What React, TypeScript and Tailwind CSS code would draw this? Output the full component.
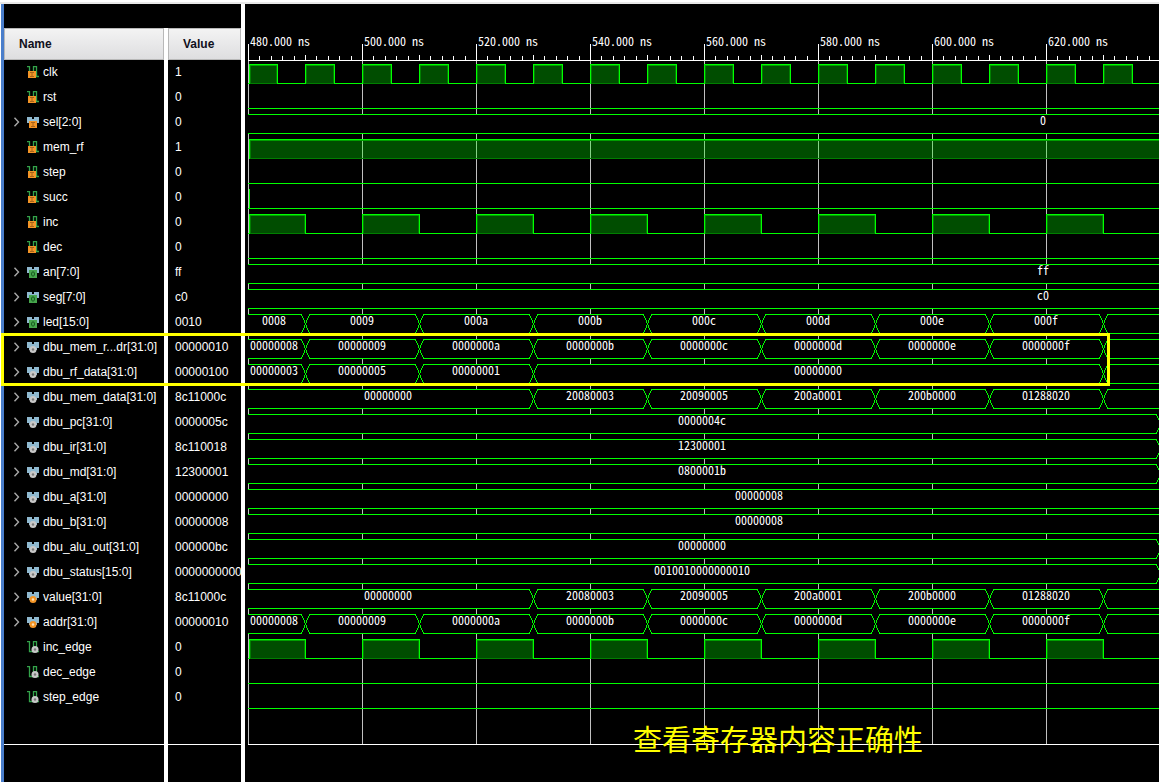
import React from "react";

type Badge = "in" | "out" | "net" | "reg";

type Pulse = { kind: "bit"; highs: [number, number][] };
type Bus = { kind: "bus"; edges: number[]; labels: [number, string][] };

type Signal = {
  name: string;
  value: string;
  badge: Badge;
  wave: Pulse | Bus;
};

const X0 = 3;
const ROW = 25;
const WIDE = 4000;
const at = (ns: number) => X0 + Math.round((ns - 480) * 5.7);

const range = (n: number) => Array.from({ length: n }, (_, i) => i);

const low: Pulse = { kind: "bit", highs: [] };
const clock: Pulse = {
  kind: "bit",
  highs: range(16).map((i) => [480 + i * 10, 485 + i * 10]),
};
const toggle: Pulse = {
  kind: "bit",
  highs: range(8).map((i) => [480 + i * 20, 490 + i * 20]),
};
const bus = (edges: number[], labels: [number, string][]): Bus => ({
  kind: "bus",
  edges,
  labels,
});

const steps = range(8).map((i) => 490 + i * 20);
const counted = (prefix: string) =>
  bus(
    steps,
    ["8", "9", "a", "b", "c", "d", "e", "f"].map((d, i) => [
      i === 0 ? 29 : 117 + (i - 1) * 114,
      prefix + d,
    ])
  );
const memory = bus(steps.slice(2), [
  [143, "00000000"],
  [345, "20080003"],
  [459, "20090005"],
  [573, "200a0001"],
  [687, "200b0000"],
  [801, "01288020"],
]);

const signals: Signal[] = [
  { name: "clk", value: "1", badge: "in", wave: clock },
  { name: "rst", value: "0", badge: "in", wave: low },
  { name: "sel[2:0]", value: "0", badge: "in", wave: bus([], [[798, "0"]]) },
  { name: "mem_rf", value: "1", badge: "in", wave: { kind: "bit", highs: [[480, 1200]] } },
  { name: "step", value: "0", badge: "in", wave: low },
  { name: "succ", value: "0", badge: "in", wave: { kind: "bit", highs: [[480, 480]] } },
  { name: "inc", value: "0", badge: "in", wave: toggle },
  { name: "dec", value: "0", badge: "in", wave: low },
  { name: "an[7:0]", value: "ff", badge: "out", wave: bus([], [[798, "ff"]]) },
  { name: "seg[7:0]", value: "c0", badge: "out", wave: bus([], [[798, "c0"]]) },
  { name: "led[15:0]", value: "0010", badge: "out", wave: counted("000") },
  { name: "dbu_mem_r...dr[31:0]", value: "00000010", badge: "net", wave: counted("0000000") },
  {
    name: "dbu_rf_data[31:0]",
    value: "00000100",
    badge: "net",
    wave: bus(
      [490, 510, 530, 630],
      [
        [29, "00000003"],
        [117, "00000005"],
        [231, "00000001"],
        [573, "00000000"],
      ]
    ),
  },
  { name: "dbu_mem_data[31:0]", value: "8c11000c", badge: "net", wave: memory },
  { name: "dbu_pc[31:0]", value: "0000005c", badge: "net", wave: bus([640], [[457, "0000004c"]]) },
  { name: "dbu_ir[31:0]", value: "8c110018", badge: "net", wave: bus([640], [[457, "12300001"]]) },
  { name: "dbu_md[31:0]", value: "12300001", badge: "net", wave: bus([640], [[457, "0800001b"]]) },
  { name: "dbu_a[31:0]", value: "00000000", badge: "net", wave: bus([], [[514, "00000008"]]) },
  { name: "dbu_b[31:0]", value: "00000008", badge: "net", wave: bus([], [[514, "00000008"]]) },
  { name: "dbu_alu_out[31:0]", value: "000000bc", badge: "net", wave: bus([640], [[457, "00000000"]]) },
  {
    name: "dbu_status[15:0]",
    value: "0000000000",
    badge: "net",
    wave: bus([640], [[457, "0010010000000010"]]),
  },
  { name: "value[31:0]", value: "8c11000c", badge: "reg", wave: memory },
  { name: "addr[31:0]", value: "00000010", badge: "reg", wave: counted("0000000") },
  { name: "inc_edge", value: "0", badge: "net", wave: toggle },
  { name: "dec_edge", value: "0", badge: "net", wave: low },
  { name: "step_edge", value: "0", badge: "net", wave: low },
];

function BadgeMark({ badge, scalar }: { badge: Badge; scalar: boolean }) {
  if (badge === "in")
    return (
      <g>
        <rect x="1" y="5" width="8" height="7" fill="#f39426" />
        <path d="M3 6.5h4M5 6.5v4M3 10.5h4" stroke="#a8621a" fill="none" />
      </g>
    );
  if (badge === "out")
    return (
      <g>
        <rect x="2" y="4" width="8" height="8" fill="#46a54c" />
        <ellipse cx="6" cy="8" rx="1.5" ry="2.2" stroke="#15591f" fill="none" />
      </g>
    );
  const cx = scalar ? 8 : 6;
  const ring = badge === "reg" ? "#f39426" : "#c8c8c8";
  const dot = badge === "reg" ? "#ffe2b8" : "#777777";
  return (
    <g>
      <circle cx={cx} cy="8.5" r="3.5" fill={ring} />
      <circle cx={cx} cy="8.5" r="1.2" fill={dot} />
    </g>
  );
}

function SignalIcon({ badge, scalar }: { badge: Badge; scalar: boolean }) {
  return (
    <svg className="h-3 w-3 shrink-0" viewBox="0 0 12 12" aria-hidden="true">
      {scalar ? (
        <path
          d="M0 .6H2.5V10.5H6.5V.6H9.5V10.5H12"
          fill="none"
          stroke="#33a34a"
          strokeWidth="1.3"
        />
      ) : (
        <path d="M0 1H5V3H7V1H12V7H10V9H2V7H0Z" fill="#8fb9d0" />
      )}
      <g transform={badge === "in" && !scalar ? "translate(1 0)" : undefined}>
        <BadgeMark badge={badge} scalar={scalar} />
      </g>
    </svg>
  );
}

function Chevron() {
  return (
    <svg className="h-2.5 w-2" viewBox="0 0 8 10" aria-hidden="true">
      <path d="M2.5 .8L6.5 5L2.5 9.2" fill="none" stroke="#a8a8a8" strokeWidth="1.4" />
    </svg>
  );
}

function BitWave({ wave, top }: { wave: Pulse; top: number }) {
  const bottom = top + 19;
  return (
    <g>
      {!(wave.highs[0] && wave.highs[0][1] > 1000) && (
        <rect x={X0} y={bottom} width={WIDE} height="1" fill="#00ff00" />
      )}
      {wave.highs.map(([from, to]) => {
        const a = from === 480 ? at(from) + 1 : at(from);
        const b = Math.max(at(to), a);
        const w = b - a + 1;
        if (w < 3) return <rect key={from} x={X0 + 1} y={top} width="1" height="20" fill="#00ff00" />;
        return (
          <g key={from}>
            <rect x={a} y={bottom} width={w} height="1" fill="#000000" />
            <rect x={a} y={top} width={w} height="20" fill="#00ff00" fillOpacity="0.3" />
            <rect x={a + 1} y={bottom} width={w - 2} height="1" fill="#007f00" />
            <rect x={a} y={top + 1} width={w} height="1" fill="#00a000" />
            <rect x={a + 1} y={top + 2} width="1" height="18" fill="#007f00" />
            <rect x={b - 1} y={top + 2} width="1" height="18" fill="#007f00" />
            <rect x={a} y={top} width={w} height="1" fill="#00ff00" />
            <rect x={a} y={top} width="1" height="20" fill="#00ff00" />
            <rect x={b} y={top} width="1" height="20" fill="#00ff00" />
          </g>
        );
      })}
    </g>
  );
}

function crossing(x: number, top: number) {
  return range(20)
    .map((dy) => {
      const dx = Math.round((8 * dy) / 19) - 4;
      return `M${x + dx} ${top + dy}h1v1h-1zM${x - dx} ${top + dy}h1v1h-1z`;
    })
    .join("");
}

function BusWave({ wave, top }: { wave: Bus; top: number }) {
  const bottom = top + 19;
  const stops = wave.edges.map(at);
  const starts = [X0, ...stops.map((x) => x + 4)];
  const ends = [...stops.map((x) => x - 3), WIDE];
  return (
    <g>
      <rect x={X0} y={top} width={WIDE} height="20" fill="#000000" />
      {starts.map((s, i) => (
        <g key={s} fill="#00ff00">
          <rect x={s} y={top} width={ends[i] - s} height="1" />
          <rect x={s} y={bottom} width={ends[i] - s} height="1" />
        </g>
      ))}
      {stops.map((x) => (
        <path key={x} d={crossing(x, top)} fill="#00ff00" />
      ))}
      {wave.labels.map(([x, text]) => (
        <text key={x} x={x} y={top + 11} textAnchor="middle" fill="#ffffff">
          {text}
        </text>
      ))}
    </g>
  );
}

function WaveView() {
  return (
    <svg
      className="block h-full w-full font-['Noto_Sans_CJK_SC',monospace] text-[12px] [font-feature-settings:'hwid','liga'_0]"
      shapeRendering="crispEdges"
      role="img"
      aria-label="Waveforms"
    >
      {range(30).map((i) => (
        <rect key={i} x={at(480 + i * 20)} y="57" width="1" height="683" fill="#c0c0c0" />
      ))}
      <rect x={X0} y="56" width="100%" height="1" fill="#ffffff" />
      {range(300).map((i) => {
        const h = i % 10 === 0 ? 16 : i % 5 === 0 ? 5 : 4;
        return <rect key={i} x={at(480 + i * 2)} y={56 - h} width="1" height={h} fill="#ffffff" />;
      })}
      {range(8).map((i) => (
        <text key={i} x={at(480 + i * 20) + 2} y="42" fill="#ffffff">
          {`${480 + i * 20}.000 ns`}
        </text>
      ))}
      {signals.map((s, i) =>
        s.wave.kind === "bit" ? (
          <BitWave key={s.name} wave={s.wave} top={60 + i * ROW} />
        ) : (
          <BusWave key={s.name} wave={s.wave} top={60 + i * ROW} />
        )
      )}
      <rect x={X0} y="740" width="100%" height="1" fill="#ffffff" />
    </svg>
  );
}

function ColumnHead({ children }: { children: React.ReactNode }) {
  return (
    <div className="mt-6 flex h-8 shrink-0 items-center border border-[#b8b8b8] bg-linear-to-b from-[#f3f3f3] to-[#dedee0] px-3.5 font-bold text-[#101020]">
      {children}
    </div>
  );
}

export default function App() {
  return (
    <main className="relative flex h-screen min-h-[782px] flex-col overflow-hidden bg-black font-['Liberation_Sans',Arial,sans-serif] text-[12px] leading-4 text-white">
      <div className="h-1 shrink-0 border-b-2 border-[#e8e8e8] bg-white" />
      <div className="flex min-h-0 flex-1">
        <div className="w-1 shrink-0 border-l border-white bg-[#4a7ecb]" />
        <section className="flex w-40 shrink-0 flex-col">
          <ColumnHead>Name</ColumnHead>
          <ul className="h-[685px] shrink-0 border-b border-white">
            {signals.map((s) => {
              const scalar = s.wave.kind === "bit";
              return (
                <li key={s.name} className="flex h-[25px] items-center whitespace-nowrap pb-px pl-2">
                  <span className="flex w-[15px] shrink-0">
                    {!scalar && (
                      <button type="button" aria-label={`Expand ${s.name}`}>
                        <Chevron />
                      </button>
                    )}
                  </span>
                  <SignalIcon badge={s.badge} scalar={scalar} />
                  <span className="pl-1">{s.name}</span>
                </li>
              );
            })}
          </ul>
        </section>
        <div className="mt-6 w-1 shrink-0 bg-white" />
        <section className="flex w-[73px] shrink-0 flex-col overflow-hidden">
          <ColumnHead>Value</ColumnHead>
          <ul className="h-[685px] shrink-0 border-b border-white">
            {signals.map((s) => (
              <li key={s.name} className="flex h-[25px] items-center pb-px pl-[7px]">
                {s.value}
              </li>
            ))}
          </ul>
        </section>
        <div className="w-1 shrink-0 bg-white" />
        <section className="min-w-0 flex-1">
          <WaveView />
        </section>
      </div>
      <div className="pointer-events-none absolute left-px top-[333px] h-[53px] w-[1109px] border-3 border-[#ffff00]" />
      <p className="absolute left-[633px] top-[718px] whitespace-nowrap font-['Noto_Sans_CJK_SC',sans-serif] text-[29px] leading-10 text-[#ffff00]">
        查看寄存器内容正确性
      </p>
    </main>
  );
}
